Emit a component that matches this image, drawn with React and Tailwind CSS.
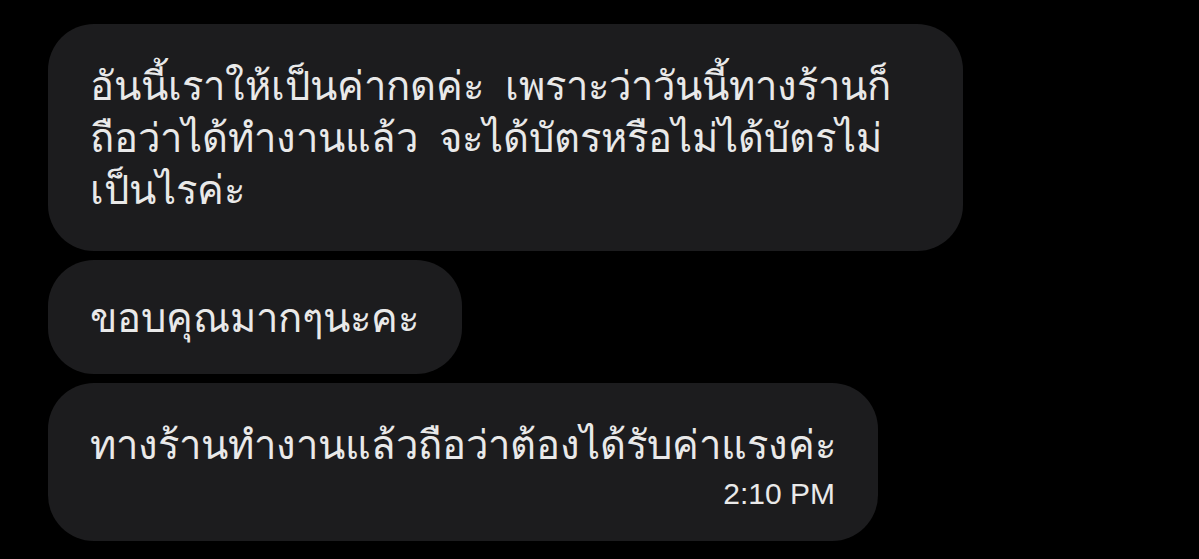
import React from "react";

const messages = [
  {
    lines: [
      "อันนี้เราให้เป็นค่ากดค่ะ  เพราะว่าวันนี้ทางร้านก็",
      "ถือว่าได้ทำงานแล้ว  จะได้บัตรหรือไม่ได้บัตรไม่",
      "เป็นไรค่ะ",
    ],
    width: "w-[915px]",
    pad: "pt-[35px] pb-[36px]",
  },
  { lines: ["ขอบคุณมากๆนะคะ"], width: "w-[414px]", pad: "pt-[31px] pb-[31px]" },
  {
    lines: ["ทางร้านทำงานแล้วถือว่าต้องได้รับค่าแรงค่ะ"],
    width: "w-[830px]",
    pad: "pt-[35px] pb-[30px]",
    time: "2:10 PM",
  },
];

function Bubble({ lines, width, pad, time }) {
  return (
    <div className={`${width} ${pad} rounded-[46px] bg-[#1c1c1e] pl-[42px] pr-[43px]`}>
      <div className="text-[40px] leading-[52px] text-[#e9e9e9]">
        {lines.map((l, i) => (
          <div key={i} className="whitespace-pre">
            {l}
          </div>
        ))}
      </div>
      {time && (
        <div className="mt-[7px] text-right font-['Liberation_Sans',Arial,sans-serif] text-[30px] leading-[34px] text-[#e9e9e9]">
          {time}
        </div>
      )}
    </div>
  );
}

export default function App() {
  return (
    <div className="h-[559px] w-[1199px] overflow-hidden bg-black font-['Noto_Sans','DejaVu_Sans',sans-serif]">
      <div className="flex flex-col gap-[9px] pl-[48px] pt-[24px]">
        {messages.map((m, i) => (
          <Bubble key={i} {...m} />
        ))}
      </div>
    </div>
  );
}
